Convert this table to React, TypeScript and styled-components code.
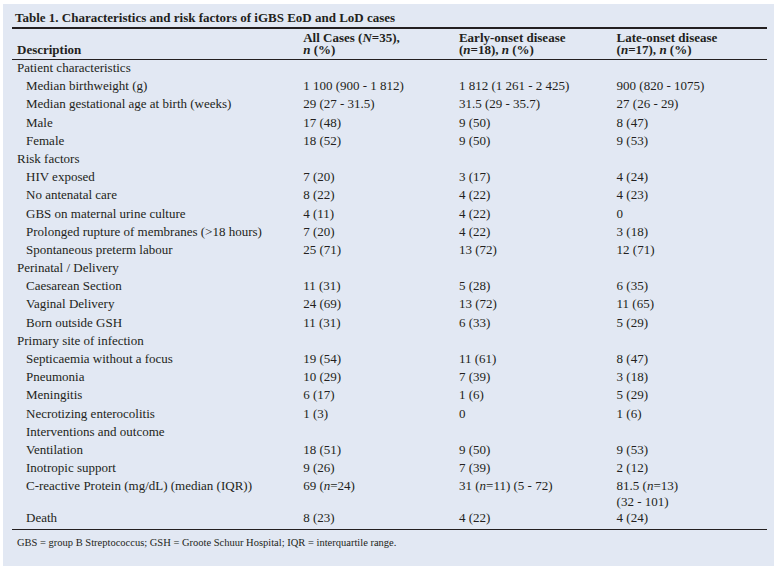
import React from 'react';
import styled, { createGlobalStyle } from 'styled-components';

const GlobalStyle = createGlobalStyle`
  html, body {
    margin: 0;
    padding: 0;
    background: #ffffff;
  }
  body {
    font-family: "Liberation Serif", "Times New Roman", serif;
    color: #231f20;
  }
`;

const Panel = styled.div`
  margin: 4px 4px 0 3px;
  height: 562px;
  box-sizing: border-box;
  background: #e2e8f3;
  padding: 6px 8px 0 9px;
`;

const Title = styled.div`
  font-weight: bold;
  font-size: 13px;
  line-height: 15px;
  padding-left: 3px;
  padding-bottom: 2px;
`;

const Table = styled.table`
  width: 755px;
  border-collapse: collapse;
  border-top: 2px solid #231f20;
  border-bottom: 1px solid #231f20;
  font-size: 13px;
`;

const HeadCell = styled.th<{ $w: number }>`
  width: ${(p) => p.$w}px;
  text-align: left;
  vertical-align: bottom;
  font-weight: bold;
  line-height: 12px;
  padding: 3px 0 3px 5px;
  border-bottom: 1px solid #231f20;
`;

const Row = styled.tr``;

const Cell = styled.td<{ $indent?: boolean }>`
  padding: 0 0 0 ${(p) => (p.$indent ? 14 : 5)}px;
  height: 18.2px;
  line-height: 16px;
  vertical-align: top;
  white-space: nowrap;
`;

const Note = styled.div`
  font-size: 10.5px;
  padding: 7px 0 0 5px;
`;

type Item = { label: string; a?: React.ReactNode; b?: React.ReactNode; c?: React.ReactNode; section?: boolean };

const rows: Item[] = [
  { label: 'Patient characteristics', section: true },
  { label: 'Median birthweight (g)', a: '1 100 (900 - 1 812)', b: '1 812 (1 261 - 2 425)', c: '900 (820 - 1075)' },
  { label: 'Median gestational age at birth (weeks)', a: '29 (27 - 31.5)', b: '31.5 (29 - 35.7)', c: '27 (26 - 29)' },
  { label: 'Male', a: '17 (48)', b: '9 (50)', c: '8 (47)' },
  { label: 'Female', a: '18 (52)', b: '9 (50)', c: '9 (53)' },
  { label: 'Risk factors', section: true },
  { label: 'HIV exposed', a: '7 (20)', b: '3 (17)', c: '4 (24)' },
  { label: 'No antenatal care', a: '8 (22)', b: '4 (22)', c: '4 (23)' },
  { label: 'GBS on maternal urine culture', a: '4 (11)', b: '4 (22)', c: '0' },
  { label: 'Prolonged rupture of membranes (>18 hours)', a: '7 (20)', b: '4 (22)', c: '3 (18)' },
  { label: 'Spontaneous preterm labour', a: '25 (71)', b: '13 (72)', c: '12 (71)' },
  { label: 'Perinatal / Delivery', section: true },
  { label: 'Caesarean Section', a: '11 (31)', b: '5 (28)', c: '6 (35)' },
  { label: 'Vaginal Delivery', a: '24 (69)', b: '13 (72)', c: '11 (65)' },
  { label: 'Born outside GSH', a: '11 (31)', b: '6 (33)', c: '5 (29)' },
  { label: 'Primary site of infection', section: true },
  { label: 'Septicaemia without a focus', a: '19 (54)', b: '11 (61)', c: '8 (47)' },
  { label: 'Pneumonia', a: '10 (29)', b: '7 (39)', c: '3 (18)' },
  { label: 'Meningitis', a: '6 (17)', b: '1 (6)', c: '5 (29)' },
  { label: 'Necrotizing enterocolitis', a: '1 (3)', b: '0', c: '1 (6)' },
  { label: 'Interventions and outcome' },
  { label: 'Ventilation', a: '18 (51)', b: '9 (50)', c: '9 (53)' },
  { label: 'Inotropic support', a: '9 (26)', b: '7 (39)', c: '2 (12)' },
  {
    label: 'C-reactive Protein (mg/dL) (median (IQR))',
    a: <>69 (<i>n</i>=24)</>,
    b: <>31 (<i>n</i>=11) (5 - 72)</>,
    c: <>81.5 (<i>n</i>=13)<br />(32 - 101)</>,
  },
  { label: 'Death', a: '8 (23)', b: '4 (22)', c: '4 (24)' },
];

const App = () => (
  <>
    <GlobalStyle />
    <Panel>
      <Title>Table 1. Characteristics and risk factors of iGBS EoD and LoD cases</Title>
      <Table>
        <thead>
          <tr>
            <HeadCell $w={285}>Description</HeadCell>
            <HeadCell $w={156}>
              All Cases (<i>N</i>=35),<br />
              <i>n</i> (%)
            </HeadCell>
            <HeadCell $w={157}>
              Early-onset disease<br />(<i>n</i>=18), <i>n</i> (%)
            </HeadCell>
            <HeadCell $w={157}>
              Late-onset disease<br />(<i>n</i>=17), <i>n</i> (%)
            </HeadCell>
          </tr>
        </thead>
        <tbody>
          {rows.map((r) => (
            <Row key={r.label}>
              <Cell $indent={!r.section}>{r.label}</Cell>
              <Cell>{r.a}</Cell>
              <Cell>{r.b}</Cell>
              <Cell>{r.c}</Cell>
            </Row>
          ))}
        </tbody>
      </Table>
      <Note>GBS = group B Streptococcus; GSH = Groote Schuur Hospital; IQR = interquartile range.</Note>
    </Panel>
  </>
);

export default App;
